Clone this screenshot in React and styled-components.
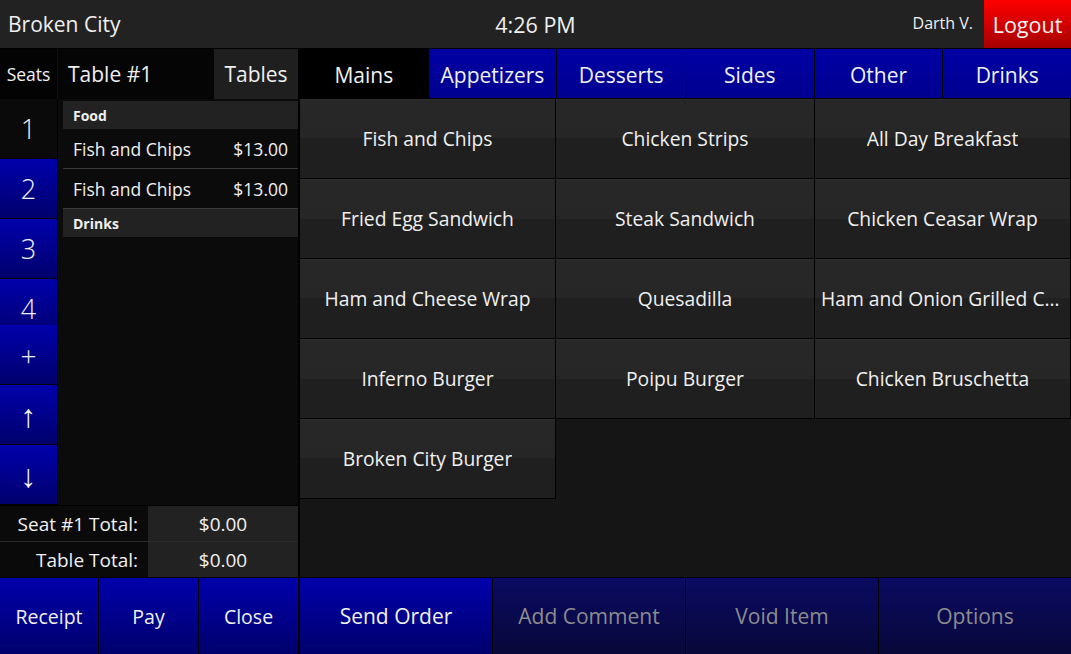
import styled, { createGlobalStyle } from 'styled-components';

const GlobalStyle = createGlobalStyle`
  html, body {
    margin: 0;
    padding: 0;
    background: #000;
    font-family: 'Open Sans', 'Noto Sans', sans-serif;
    color: #f0f0f0;
  }
  * { box-sizing: border-box; }
`;

const blue = 'linear-gradient(to bottom, #0000ac 0%, #00006c 100%)';
const dimBlue = 'linear-gradient(to bottom, #0a0a62 0%, #08083a 100%)';

const Screen = styled.div`
  width: 1071px;
  height: 654px;
  display: flex;
  flex-direction: column;
  background: #000;
  overflow: hidden;
`;

const Header = styled.header`
  height: 49px;
  display: grid;
  grid-template-columns: 1fr auto 1fr;
  align-items: center;
  background: #222;
  border-bottom: 1px solid #000;
`;

const Brand = styled.div`
  font-size: 21px;
  padding-left: 8px;
`;

const Clock = styled.div`
  font-size: 21.5px;
`;

const User = styled.div`
  justify-self: end;
  display: flex;
  align-items: stretch;
  height: 48px;
`;

const UserName = styled.span`
  font-size: 16px;
  padding: 12px 11px 0 0;
`;

const Logout = styled.button`
  width: 87px;
  border: none;
  font-family: inherit;
  font-size: 21.5px;
  color: #f4f4f4;
  background: linear-gradient(to bottom, #ff0000 0%, #a50000 100%);
  padding: 0;
`;

const Body = styled.div`
  flex: 1;
  display: flex;
  gap: 2px;
  min-height: 0;
`;

const LeftPanel = styled.div`
  width: 298px;
  display: flex;
  flex-direction: column;
`;

const RightPanel = styled.div`
  flex: 1;
  display: flex;
  flex-direction: column;
`;

const TopRow = styled.div`
  height: 50px;
  display: flex;
`;

const SeatsLabel = styled.div`
  width: 58px;
  display: flex;
  align-items: center;
  justify-content: center;
  font-size: 17.5px;
  background: #030303;
  border-right: 1px solid #111;
`;

const TableName = styled.div`
  flex: 1;
  display: flex;
  align-items: center;
  padding-left: 10px;
  font-size: 21px;
  background: #050505;
`;

const TablesButton = styled.div`
  width: 84px;
  display: flex;
  align-items: center;
  justify-content: center;
  font-size: 21px;
  background: #1f1f1f;
`;

const Middle = styled.div`
  flex: 1;
  display: flex;
  min-height: 0;
  background: #0b0b0b;
`;

const SeatColumn = styled.div`
  width: 58px;
  display: flex;
  flex-direction: column;
  border-right: 1px solid #000;
`;

const SeatList = styled.div`
  flex: 1;
  overflow: hidden;
  min-height: 0;
`;

const SeatButton = styled.div`
  height: 60px;
  flex-shrink: 0;
  display: flex;
  align-items: center;
  justify-content: center;
  font-size: ${(p) => p.$size || '27px'};
  font-weight: 300;
  background: ${(p) => (p.$active ? '#0a0a0a' : blue)};
  border-bottom: 1px solid #000;
`;

const OrderList = styled.div`
  flex: 1;
  padding: 2px 0 0 5px;
`;

const Category = styled.div`
  height: 28px;
  display: flex;
  align-items: center;
  padding-left: 10px;
  font-size: 14px;
  font-weight: 700;
  background: #222;
`;

const OrderItem = styled.div`
  height: 40px;
  display: flex;
  align-items: center;
  justify-content: space-between;
  padding: 0 10px;
  font-size: 17.5px;
  border-bottom: 1px solid #3a3a3a;
`;

const TotalRow = styled.div`
  height: 36px;
  display: grid;
  grid-template-columns: 148px 1fr;
  font-size: 19px;
  border-top: 1px solid #2a2a2a;
  &:first-child {
    border-top: 1px solid #000;
  }
`;

const TotalLabel = styled.div`
  display: flex;
  align-items: center;
  justify-content: flex-end;
  padding-right: 10px;
  background: #0a0a0a;
`;

const TotalValue = styled.div`
  display: flex;
  align-items: center;
  justify-content: center;
  background: #222;
`;

const ActionBar = styled.div`
  height: 77px;
  display: grid;
  grid-template-columns: ${(p) => p.$cols};
  gap: 1px;
  background: #000;
  border-top: 1px solid #000;
  font-size: ${(p) => p.$size};
`;

const ActionButton = styled.div`
  display: flex;
  align-items: center;
  justify-content: center;
  color: ${(p) => (p.$disabled ? '#8c8c8c' : '#f0f0f0')};
  background: ${(p) => (p.$disabled ? dimBlue : blue)};
`;

const Tabs = styled.div`
  height: 50px;
  display: grid;
  grid-template-columns: repeat(6, 1fr);
  gap: 1px;
  background: #000;
  border-bottom: 1px solid #000;
`;

const Tab = styled.div`
  display: flex;
  align-items: center;
  justify-content: center;
  padding-top: 2px;
  font-size: 21px;
  background: ${(p) =>
    p.$active ? '#000' : 'linear-gradient(to bottom, #0000a4 0%, #000090 100%)'};
`;

const MenuArea = styled.div`
  flex: 1;
  background: #151515;
  min-height: 0;
`;

const MenuGrid = styled.div`
  display: grid;
  grid-template-columns: 256px 259px 256px;
  grid-auto-rows: 80px;
`;

const MenuButton = styled.div`
  display: flex;
  align-items: center;
  justify-content: center;
  padding: 0 6px;
  font-size: 19.3px;
  white-space: nowrap;
  overflow: hidden;
  background: linear-gradient(to bottom, #272727 0%, #262626 50%, #1f1f1f 50%, #1f1f1f 100%);
  border-right: 1px solid #000;
  border-bottom: 1px solid #000;
  box-shadow: inset 0 1px 0 #303030;
`;

const MenuLabel = styled.span`
  overflow: hidden;
  text-overflow: ellipsis;
`;

const menuItems = [
  'Fish and Chips',
  'Chicken Strips',
  'All Day Breakfast',
  'Fried Egg Sandwich',
  'Steak Sandwich',
  'Chicken Ceasar Wrap',
  'Ham and Cheese Wrap',
  'Quesadilla',
  'Ham and Onion Grilled Cheese',
  'Inferno Burger',
  'Poipu Burger',
  'Chicken Bruschetta',
  'Broken City Burger',
];

const tabs = ['Mains', 'Appetizers', 'Desserts', 'Sides', 'Other', 'Drinks'];

const App = () => {
  return (
    <Screen>
      <GlobalStyle />
      <Header>
        <Brand>Broken City</Brand>
        <Clock>4:26 PM</Clock>
        <User>
          <UserName>Darth V.</UserName>
          <Logout>Logout</Logout>
        </User>
      </Header>
      <Body>
        <LeftPanel>
          <TopRow>
            <SeatsLabel>Seats</SeatsLabel>
            <TableName>Table #1</TableName>
            <TablesButton>Tables</TablesButton>
          </TopRow>
          <Middle>
            <SeatColumn>
              <SeatList>
                <SeatButton $active>1</SeatButton>
                <SeatButton>2</SeatButton>
                <SeatButton>3</SeatButton>
                <SeatButton>4</SeatButton>
              </SeatList>
              <SeatButton $size="28px">+</SeatButton>
              <SeatButton $size="32px">↑</SeatButton>
              <SeatButton $size="32px">↓</SeatButton>
            </SeatColumn>
            <OrderList>
              <Category>Food</Category>
              <OrderItem>
                <span>Fish and Chips</span>
                <span>$13.00</span>
              </OrderItem>
              <OrderItem>
                <span>Fish and Chips</span>
                <span>$13.00</span>
              </OrderItem>
              <Category>Drinks</Category>
            </OrderList>
          </Middle>
          <div>
            <TotalRow>
              <TotalLabel>Seat #1 Total:</TotalLabel>
              <TotalValue>$0.00</TotalValue>
            </TotalRow>
            <TotalRow>
              <TotalLabel>Table Total:</TotalLabel>
              <TotalValue>$0.00</TotalValue>
            </TotalRow>
          </div>
          <ActionBar $cols="98px 99px 1fr" $size="19.5px">
            <ActionButton>Receipt</ActionButton>
            <ActionButton>Pay</ActionButton>
            <ActionButton>Close</ActionButton>
          </ActionBar>
        </LeftPanel>
        <RightPanel>
          <Tabs>
            {tabs.map((t, i) => (
              <Tab key={t} $active={i === 0}>
                {t}
              </Tab>
            ))}
          </Tabs>
          <MenuArea>
            <MenuGrid>
              {menuItems.map((m) => (
                <MenuButton key={m}>
                  <MenuLabel>{m}</MenuLabel>
                </MenuButton>
              ))}
            </MenuGrid>
          </MenuArea>
          <ActionBar $cols="repeat(4, 1fr)" $size="21px">
            <ActionButton>Send Order</ActionButton>
            <ActionButton $disabled>Add Comment</ActionButton>
            <ActionButton $disabled>Void Item</ActionButton>
            <ActionButton $disabled>Options</ActionButton>
          </ActionBar>
        </RightPanel>
      </Body>
    </Screen>
  );
};

export default App;
